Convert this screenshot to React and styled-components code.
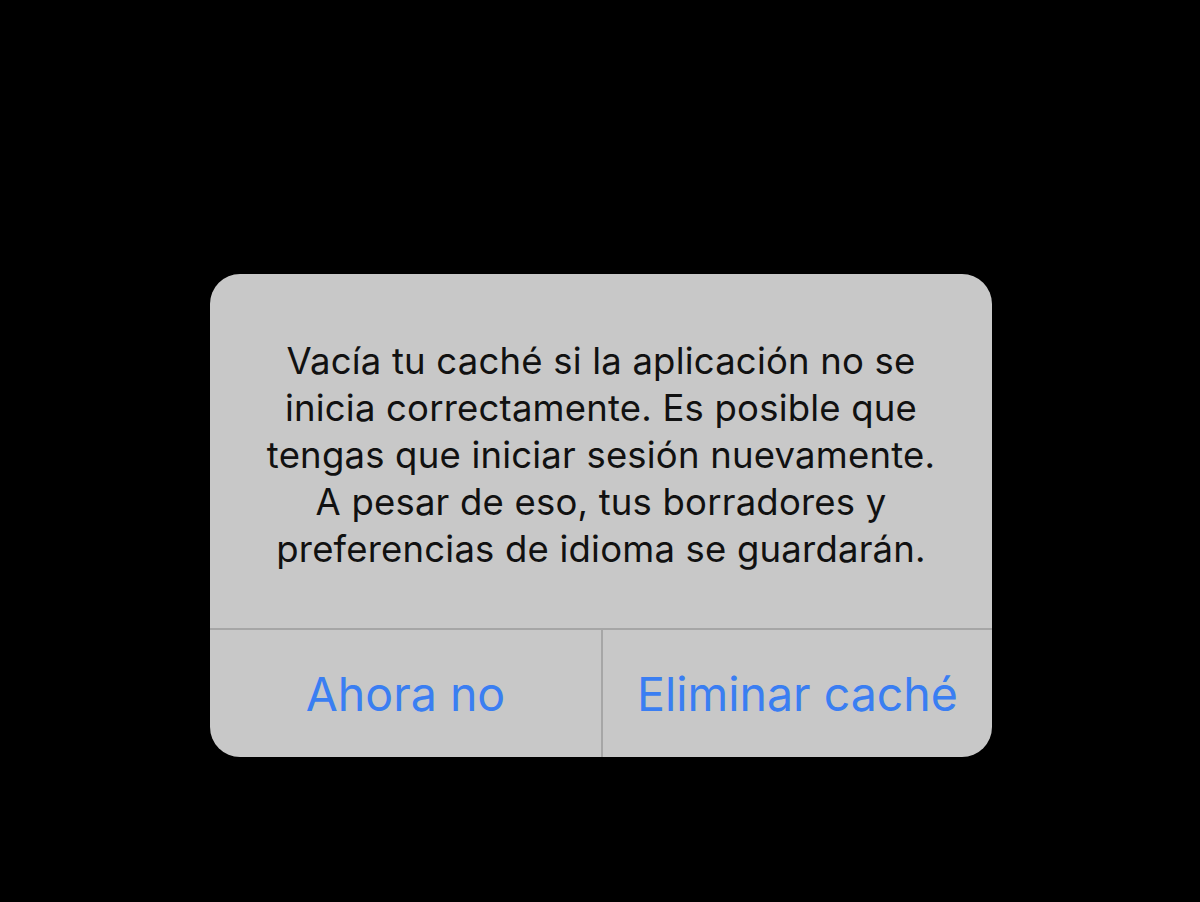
import styled, { createGlobalStyle } from "styled-components";

const GlobalStyle = createGlobalStyle`
  html, body {
    margin: 0;
    padding: 0;
    background: #000;
  }
`;

const Screen = styled.div`
  width: 1200px;
  height: 902px;
  background: #000;
  display: flex;
  justify-content: center;
  padding-top: 274px;
  padding-left: 2px;
  box-sizing: border-box;
  font-family: Inter, "Liberation Sans", sans-serif;
`;

const Alert = styled.div`
  width: 782px;
  height: 483px;
  background: #c8c8c8;
  border-radius: 30px;
  overflow: hidden;
  display: flex;
  flex-direction: column;
`;

const Message = styled.div`
  height: 356px;
  display: flex;
  align-items: center;
  justify-content: center;
  padding: 8px 30px 0;
  box-sizing: border-box;
  text-align: center;
  color: #111;
  font-size: 36.5px;
  line-height: 47px;
  letter-spacing: 0.2px;
  border-bottom: 2px solid #a6a6a6;
`;

const Actions = styled.div`
  flex: 1;
  display: grid;
  grid-template-columns: 1fr 1fr;
`;

const Action = styled.button`
  border: none;
  background: transparent;
  font-family: inherit;
  font-size: 46.5px;
  color: #3a7ef2;
  padding: 0;
  cursor: pointer;
  border-left: ${({ $divided }) => ($divided ? "2px solid #a6a6a6" : "none")};
`;

export default function App() {
  return (
    <>
      <GlobalStyle />
      <Screen>
        <Alert>
          <Message>
            Vacía tu caché si la aplicación no se
            <br />
            inicia correctamente. Es posible que
            <br />
            tengas que iniciar sesión nuevamente.
            <br />
            A pesar de eso, tus borradores y
            <br />
            preferencias de idioma se guardarán.
          </Message>
          <Actions>
            <Action>Ahora no</Action>
            <Action $divided>Eliminar caché</Action>
          </Actions>
        </Alert>
      </Screen>
    </>
  );
}
